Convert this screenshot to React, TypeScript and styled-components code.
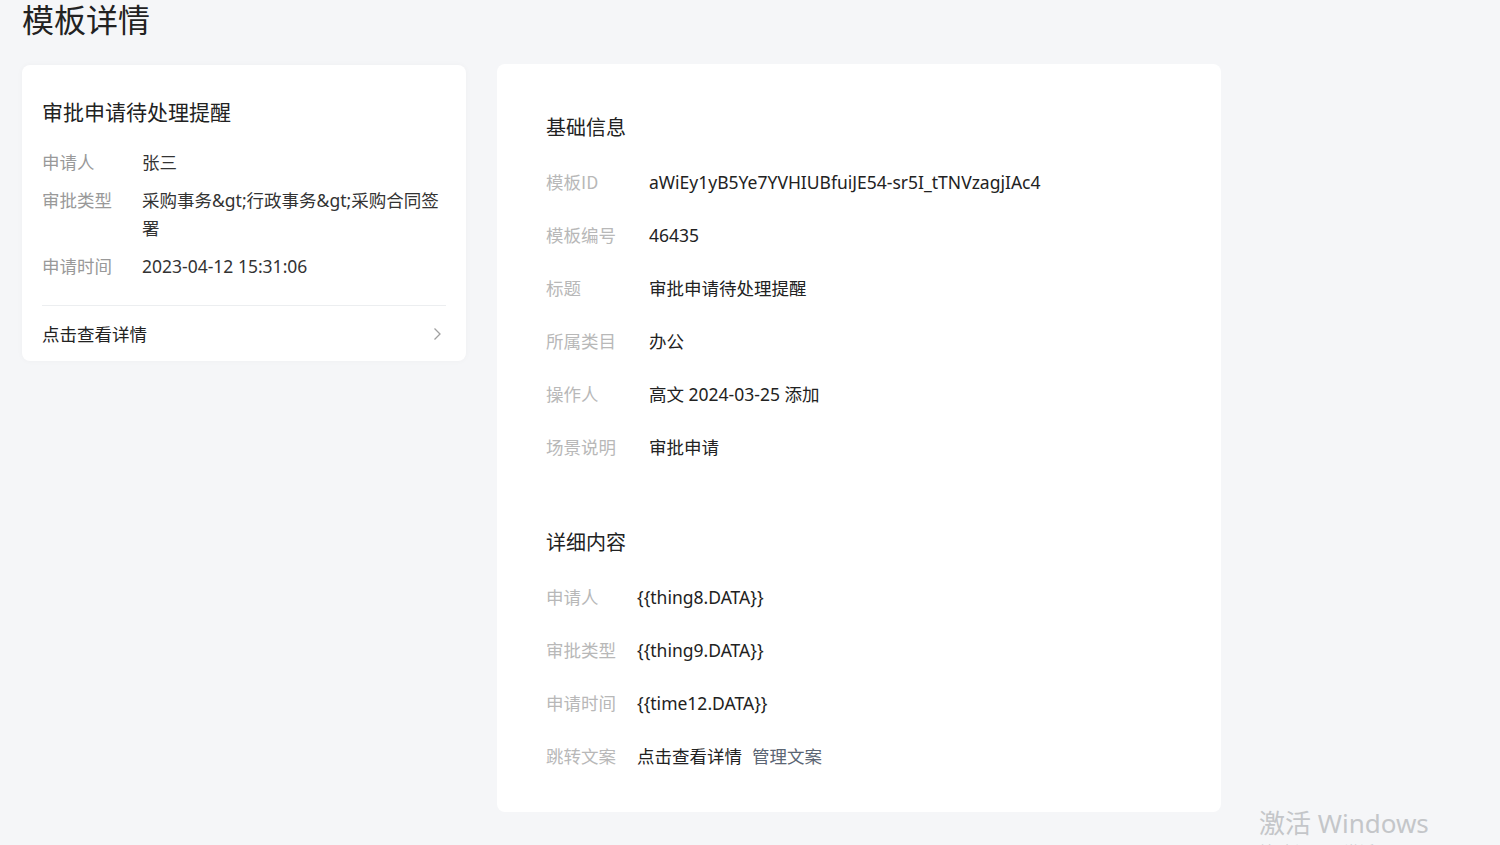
import React from "react"
import styled, { createGlobalStyle } from "styled-components"

const GlobalStyle = createGlobalStyle`
  html, body {
    margin: 0;
    padding: 0;
    background: #f5f6f8;
  }
  body {
    font-family: "Noto Sans", "Noto Sans CJK SC", sans-serif;
    color: #333;
    overflow: hidden;
  }
`

const Page = styled.div`
  position: relative;
  width: 1500px;
  height: 845px;
  padding: 0 22px;
  box-sizing: border-box;
  overflow: hidden;
`

const PageTitle = styled.h1`
  margin: 0;
  font-size: 32px;
  font-weight: 400;
  line-height: 36px;
  color: #222;
  font-family: "Noto Sans CJK SC", sans-serif;
`

const Content = styled.div`
  display: flex;
  align-items: flex-start;
  gap: 31px;
  margin-top: 28px;
`

const PreviewCard = styled.div`
  width: 444px;
  box-sizing: border-box;
  background: #fff;
  border-radius: 8px;
  padding: 28px 20px 0 20px;
  margin-top: 1px;
  box-shadow: 0 0 6px rgba(0, 0, 0, 0.03);
`

const PreviewTitle = styled.div`
  font-size: 21px;
  line-height: 36px;
  color: #222;
  font-family: "Noto Sans CJK SC", sans-serif;
  margin-bottom: 19px;
`

const PreviewRow = styled.div`
  display: grid;
  grid-template-columns: 100px 1fr;
  font-size: 17.5px;
  line-height: 28px;
  margin-bottom: 10px;
`

const PreviewLabel = styled.div`
  color: #999;
  font-family: "Noto Sans CJK SC", sans-serif;
`

const PreviewValue = styled.div`
  color: #333;
  font-family: "Noto Sans", "Noto Sans CJK SC", sans-serif;
  word-break: break-all;
`

const PreviewFooter = styled.div`
  display: flex;
  align-items: center;
  justify-content: space-between;
  height: 55px;
  margin-top: 25px;
  border-top: 1px solid #eceef0;
  font-size: 17.5px;
  color: #222;
  font-family: "Noto Sans CJK SC", sans-serif;
`

const Chevron = styled.svg`
  width: 14px;
  height: 14px;
  margin-right: 2px;
`

const DetailCard = styled.div`
  width: 724px;
  height: 748px;
  box-sizing: border-box;
  background: #fff;
  border-radius: 8px;
  padding: 49px 49px 0 49px;
`

const SectionTitle = styled.div`
  font-size: 20px;
  line-height: 28px;
  color: #222;
  font-family: "Noto Sans CJK SC", sans-serif;
  margin-bottom: 27px;
`

const Section = styled.div<{ $gapAfter?: number }>`
  margin-bottom: ${(p) => p.$gapAfter ?? 0}px;
`

const InfoRow = styled.div<{ $labelWidth: number }>`
  display: grid;
  grid-template-columns: ${(p) => p.$labelWidth}px 1fr;
  font-size: 17.5px;
  line-height: 28px;
  margin-bottom: 25px;
  &:last-child {
    margin-bottom: 0;
  }
`

const InfoLabel = styled.div`
  color: #b8b8b8;
  font-family: "Noto Sans CJK SC", sans-serif;
`

const InfoValue = styled.div`
  color: #222;
  font-family: "Noto Sans", "Noto Sans CJK SC", sans-serif;
`

const ManageLink = styled.span`
  color: #5b6573;
  margin-left: 10px;
`

const Watermark = styled.div`
  position: absolute;
  left: 1259px;
  top: 805px;
  color: #c4c6c9;
  font-family: "Noto Sans", "Noto Sans CJK SC", sans-serif;
  pointer-events: none;
`

const WatermarkMain = styled.div`
  font-size: 26px;
  line-height: 36px;
`

const WatermarkSub = styled.div`
  font-size: 15px;
  line-height: 20px;
`

const previewRows = [
  { label: "申请人", value: "张三" },
  { label: "审批类型", value: "采购事务&gt;行政事务&gt;采购合同签署" },
  { label: "申请时间", value: "2023-04-12 15:31:06" }
]

const basicRows = [
  { label: "模板ID", value: "aWiEy1yB5Ye7YVHIUBfuiJE54-sr5I_tTNVzagjIAc4" },
  { label: "模板编号", value: "46435" },
  { label: "标题", value: "审批申请待处理提醒" },
  { label: "所属类目", value: "办公" },
  { label: "操作人", value: "高文 2024-03-25 添加" },
  { label: "场景说明", value: "审批申请" }
]

const detailRows = [
  { label: "申请人", value: "{{thing8.DATA}}" },
  { label: "审批类型", value: "{{thing9.DATA}}" },
  { label: "申请时间", value: "{{time12.DATA}}" }
]

export default function App() {
  return (
    <>
      <GlobalStyle />
      <Page>
        <PageTitle>模板详情</PageTitle>
        <Content>
          <PreviewCard>
            <PreviewTitle>审批申请待处理提醒</PreviewTitle>
            {previewRows.map((r) => (
              <PreviewRow key={r.label}>
                <PreviewLabel>{r.label}</PreviewLabel>
                <PreviewValue>{r.value}</PreviewValue>
              </PreviewRow>
            ))}
            <PreviewFooter>
              <span>点击查看详情</span>
              <Chevron viewBox="0 0 14 14" fill="none">
                <path d="M4.5 1.5 L10 7 L4.5 12.5" stroke="#a0a0a0" strokeWidth="1.3" />
              </Chevron>
            </PreviewFooter>
          </PreviewCard>

          <DetailCard>
            <Section $gapAfter={67}>
              <SectionTitle>基础信息</SectionTitle>
              {basicRows.map((r) => (
                <InfoRow key={r.label} $labelWidth={103}>
                  <InfoLabel>{r.label}</InfoLabel>
                  <InfoValue>{r.value}</InfoValue>
                </InfoRow>
              ))}
            </Section>
            <Section>
              <SectionTitle>详细内容</SectionTitle>
              {detailRows.map((r) => (
                <InfoRow key={r.label} $labelWidth={91}>
                  <InfoLabel>{r.label}</InfoLabel>
                  <InfoValue>{r.value}</InfoValue>
                </InfoRow>
              ))}
              <InfoRow $labelWidth={91}>
                <InfoLabel>跳转文案</InfoLabel>
                <InfoValue>
                  点击查看详情
                  <ManageLink>管理文案</ManageLink>
                </InfoValue>
              </InfoRow>
            </Section>
          </DetailCard>
        </Content>
        <Watermark>
          <WatermarkMain>激活 Windows</WatermarkMain>
          <WatermarkSub>转到“设置”以激活 Windows。</WatermarkSub>
        </Watermark>
      </Page>
    </>
  )
}
